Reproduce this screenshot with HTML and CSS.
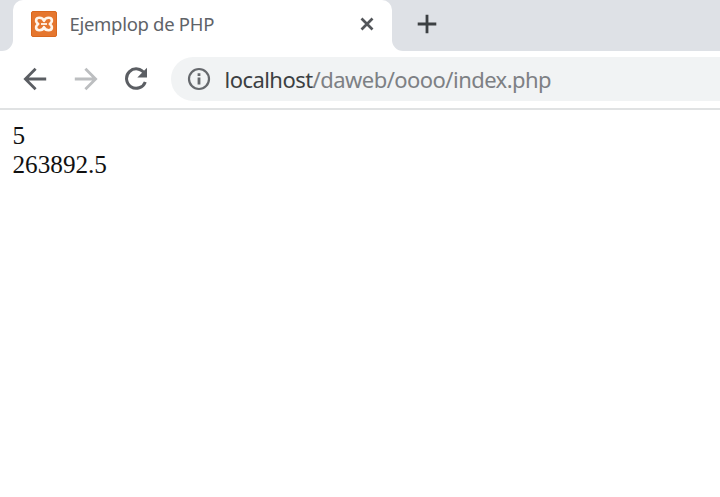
FILE: index.html
```html
<!DOCTYPE html>
<html lang="es">
<head>
<meta charset="utf-8">
<title>Ejemplop de PHP</title>
<link rel="stylesheet" href="styles.css">
</head>
<body>
<header class="browser">
  <div class="tabstrip">
    <div class="strip-left"></div>
    <div class="tab">
      <svg class="favicon" viewBox="0 0 26 26">
        <rect x="0.5" y="0.5" width="25" height="25" rx="1.5" fill="#e5762e" stroke="#d9681f"/>
        <path d="M13 9.8C12 7 10.5 6.8 8.3 6.8C4.6 6.8 4 10.7 7.2 13C4 15.3 4.6 19.2 8.3 19.2C10.5 19.2 12 19 13 16.2C14 19 15.5 19.2 17.7 19.2C21.4 19.2 22 15.3 18.8 13C22 10.7 21.4 6.8 17.7 6.8C15.5 6.8 14 7 13 9.8Z" fill="none" stroke="#fff6ec" stroke-width="2.6" stroke-linejoin="round"/>
        <path d="M10 13H16" stroke="#fff6ec" stroke-width="1.8"/>
      </svg>
      <span class="tab-title">Ejemplop de PHP</span>
      <svg class="close" viewBox="0 0 14 14"><path d="M1.5 1.5L12.5 12.5M12.5 1.5L1.5 12.5"/></svg>
    </div>
    <div class="strip-right">
      <svg class="plus" viewBox="0 0 20 20"><path d="M10 .7V19.3M.7 10H19.3"/></svg>
    </div>
  </div>
  <div class="toolbar">
    <svg class="nav" viewBox="0 0 24 24"><path d="M23.2 12H2.5M12.6 1.8L2.4 12L12.6 22.2"/></svg>
    <svg class="nav forward" viewBox="0 0 24 24"><path d="M.8 12H21.5M11.4 1.8L21.6 12L11.4 22.2"/></svg>
    <svg class="nav reload" viewBox="0 0 24 24"><path d="M20.5 6.5A9.7 9.7 0 1 0 21.3 15"/><path class="tip" d="M23 .8V10.5H13.3Z"/></svg>
    <div class="address">
      <svg class="info" viewBox="0 0 24 24"><circle cx="12" cy="12" r="10"/><path class="mark" d="M12 10.5V17.5M12 6.3V9"/></svg>
      <span class="url"><span class="host">localhost</span>/daweb/oooo/index.php</span>
    </div>
  </div>
</header>
<main class="page">5<br>263892.5</main>
</body>
</html>
```
FILE: styles.css
```css
body {
  margin: 0;
  background: #fff;
  overflow: hidden;
}
svg { flex: none; display: block; }
.browser { font-family: "Noto Sans", "Open Sans", sans-serif; }
.tabstrip {
  display: flex;
  height: 51px;
  background: #fff;
}
.strip-left {
  width: 13px;
  background: #dee1e6;
  border-bottom-right-radius: 11px;
}
.tab {
  box-sizing: border-box;
  display: flex;
  align-items: center;
  width: 379px;
  height: 51px;
  padding: 0 18px 3px;
  background: linear-gradient(#dee1e6 0 12px, transparent 12px);
  position: relative;
  z-index: 0;
}
.tab::before {
  content: "";
  position: absolute;
  inset: 0;
  z-index: -1;
  background: #fff;
  border-radius: 10px 10px 0 0;
}
.favicon { width: 26px; height: 26px; }
.tab-title {
  margin-left: 12.5px;
  flex: 1;
  font-size: 18.5px;
  letter-spacing: -0.3px;
  line-height: 26px;
  color: #606368;
  white-space: nowrap;
}
.close { width: 14px; height: 14px; fill: none; stroke: #53565a; stroke-width: 2.7; }
.strip-right {
  flex: 1;
  box-sizing: border-box;
  padding: 14px 0 0 25px;
  background: #dee1e6;
  border-bottom-left-radius: 11px;
}
.plus { width: 20px; height: 20px; stroke: #3c4043; stroke-width: 2.8; }
.toolbar {
  display: flex;
  align-items: center;
  box-sizing: border-box;
  height: 59px;
  padding: 0 0 1px 22.5px;
  border-bottom: 2px solid #e0e2e3;
}
.nav {
  width: 24px;
  height: 24px;
  margin-right: 27px;
  fill: none;
  stroke: #5b5e63;
  stroke-width: 2.8;
}
.forward { margin-right: 26px; stroke: #bcbec0; }
.reload { margin-right: 23.5px; stroke-width: 3; }
.reload .tip { fill: #5b5e63; stroke: none; }
.address {
  flex: 1;
  display: flex;
  align-items: center;
  box-sizing: border-box;
  height: 44px;
  padding-left: 16px;
  background: #f1f3f4;
  border-radius: 22px 0 0 22px;
}
.info { width: 24px; height: 24px; fill: none; stroke: #66696d; stroke-width: 2.2; }
.info .mark { stroke-width: 2.8; }
.url {
  margin-left: 13.5px;
  font-size: 22px;
  letter-spacing: -0.54px;
  line-height: 30px;
  color: #7d8084;
  white-space: nowrap;
}
.host { color: #3c3f42; }
.page {
  padding: 12px 12.5px;
  font: 25.2px/28.5px "Liberation Serif", serif;
  color: #111;
}
```
